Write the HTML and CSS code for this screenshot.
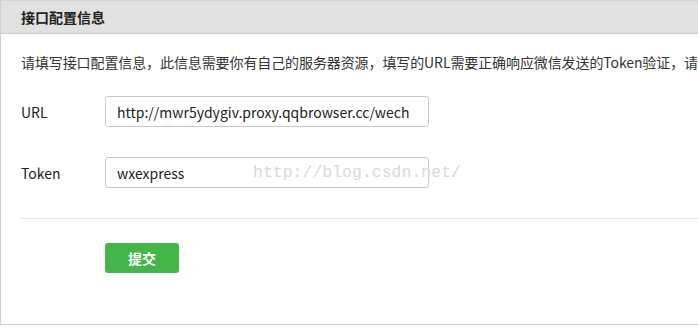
FILE: index.html
```html
<!DOCTYPE html>
<html lang="zh-CN">

<head>
  <meta charset="UTF-8">
  <meta name="viewport" content="width=device-width, initial-scale=1.0">
  <title>接口配置信息</title>
  <link rel="stylesheet" href="styles.css">
</head>

<body>
  <section class="panel">
    <div class="panel-hd">接口配置信息</div>
    <div class="panel-bd">
      <p class="tips">请填写接口配置信息，此信息需要你有自己的服务器资源，填写的URL需要正确响应微信发送的Token验证，请</p>
      <form class="form">
        <label class="form-label" for="url">URL</label>
        <input class="form-input" id="url" type="text" value="http://mwr5ydygiv.proxy.qqbrowser.cc/wech">
        <label class="form-label" for="token">Token</label>
        <input class="form-input" id="token" type="text" value="wxexpress">
      </form>
      <div class="form-ft">
        <button class="btn-submit" type="button">提交</button>
      </div>
    </div>
  </section>
  <span class="watermark">http://blog.csdn.net/</span>
</body>

</html>
```

FILE: styles.css
```css
html, body {
  margin: 0;
  padding: 0;
  overflow: hidden;
  background: #fff;
}
body {
  font-family: "Microsoft YaHei", "Noto Sans CJK SC", sans-serif;
  font-size: 14px;
  color: #222;
  position: relative;
}

.panel {
  width: 1000px;
  border-top: 1px solid #d4d4d4;
  border-left: 1px solid #cfcfcf;
  border-bottom: 1px solid #cfcfcf;
}
.panel-hd {
  height: 32px;
  line-height: 32px;
  padding-left: 20px;
  background: #e1e1e1;
  border-bottom: 1px solid #cbcbcb;
  font-weight: bold;
  color: #222;
}
.panel-bd {
  padding: 18px 0 51px 20px;
}

.tips {
  margin: 0;
  line-height: 20px;
  white-space: nowrap;
  letter-spacing: -0.1px;
  color: #333;
}

.form {
  display: grid;
  grid-template-columns: 84px 324px;
  row-gap: 30px;
  align-items: center;
  margin-top: 24px;
}
.form-label {
  color: #222;
}
.form-input {
  box-sizing: border-box;
  width: 324px;
  height: 31px;
  margin: 0;
  padding: 0 11px;
  border: 1px solid #c8c8c8;
  border-radius: 3px;
  font-family: inherit;
  font-size: 14px;
  color: #222;
  outline: none;
}

.form-ft {
  margin-top: 30px;
  border-top: 1px solid #e5e5e5;
  padding: 24px 0 0 84px;
}
.btn-submit {
  width: 74px;
  height: 30px;
  border: 0;
  border-radius: 3px;
  background: #44b549;
  color: #fff;
  font-family: inherit;
  font-size: 14px;
  font-weight: bold;
  cursor: pointer;
}

.watermark {
  position: absolute;
  top: 163px;
  left: 253px;
  font-family: "Liberation Mono", monospace;
  font-size: 16.5px;
  color: #d9d9d9;
  pointer-events: none;
}
```
